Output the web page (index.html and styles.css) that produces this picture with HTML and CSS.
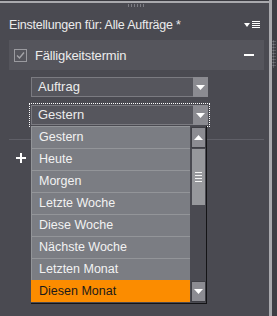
FILE: index.html
```html
<!DOCTYPE html>
<html>
<head>
<meta charset="utf-8">
<link rel="stylesheet" href="styles.css">
</head>
<body>
<div class="app">
  <div class="main">
    <div class="topbar"></div>
    <div class="grip-h"></div>
    <div class="title">
      <span>Einstellungen für: Alle Aufträge *</span>
      <svg class="menu-ico" width="16" height="8" viewBox="0 0 16 8">
        <polygon points="0,2 6,2 3,6" fill="#fff"/>
        <rect x="8" y="0" width="8" height="1" fill="#fff"/>
        <rect x="8" y="2" width="8" height="1" fill="#fff"/>
        <rect x="8" y="4" width="8" height="1" fill="#fff"/>
        <rect x="8" y="6" width="8" height="1" fill="#fff"/>
      </svg>
    </div>
    <div class="header">
      <span class="checkbox">
        <svg width="11" height="11" viewBox="0 0 11 11"><polyline points="2,5.5 4.5,8 9,2.5" fill="none" stroke="#a4a4a8" stroke-width="1.4"/></svg>
      </span>
      <span class="htext">Fälligkeitstermin</span>
      <span class="minus"></span>
    </div>
    <div class="select">
      <span class="sel-text">Auftrag</span>
      <span class="sel-arrow"><svg width="9" height="5" viewBox="0 0 9 5"><polygon points="0,0 9,0 4.5,5" fill="#fff"/></svg></span>
    </div>
    <div class="select focus">
      <span class="sel-text">Gestern</span>
      <span class="sel-arrow"><svg width="9" height="5" viewBox="0 0 9 5"><polygon points="0,0 9,0 4.5,5" fill="#fff"/></svg></span>
    </div>
    <div class="sep"></div>
    <div class="plus"></div>

    <div class="list">
      <div class="items">
        <div class="item">Gestern</div>
        <div class="item">Heute</div>
        <div class="item">Morgen</div>
        <div class="item">Letzte Woche</div>
        <div class="item">Diese Woche</div>
        <div class="item">Nächste Woche</div>
        <div class="item">Letzten Monat</div>
        <div class="item selected">Diesen Monat</div>
      </div>
      <div class="scroll">
        <div class="sbtn"><svg width="9" height="5" viewBox="0 0 9 5"><polygon points="0,5 9,5 4.5,0" fill="#fff"/></svg></div>
        <div class="thumb"><span></span><span></span><span></span><span></span></div>
        <div class="track"></div>
        <div class="sbtn"><svg width="9" height="5" viewBox="0 0 9 5"><polygon points="0,0 9,0 4.5,5" fill="#fff"/></svg></div>
      </div>
    </div>
  </div>
  <div class="vsplit"></div>
  <div class="edge"><div class="grip-v"></div></div>
</div>
</body>
</html>
```

FILE: styles.css
```css
html, body {
  margin: 0;
  padding: 0;
}
body {
  font-family: "Liberation Sans", Arial, sans-serif;
  font-size: 12.5px;
  color: #ececec;
  background: #4a4a51;
}
.app {
  display: flex;
  width: 277px;
  height: 316px;
  overflow: hidden;
  background: #4a4a51;
}
.main {
  width: 269px;
  position: relative;
  display: flex;
  flex-direction: column;
}
.topbar {
  height: 2px;
  border-top: 1px solid #3a3a40;
  background: #a9a9ad;
}
.grip-h {
  position: absolute;
  left: 127px;
  top: 4px;
  width: 18px;
  height: 3px;
  background-image: radial-gradient(circle, #7d7d84 0.8px, transparent 1px);
  background-size: 3px 2px;
}
.title {
  margin: 13px 9px 0 9px;
  height: 18px;
  display: flex;
  align-items: center;
  justify-content: space-between;
  white-space: nowrap;
}
.title span {
  letter-spacing: -0.2px;
}
.header {
  margin: 6px 5px 0 9px;
  height: 30px;
  background: #55555c;
  display: flex;
  align-items: center;
  padding: 0 10px 0 5px;
}
.checkbox {
  width: 13px;
  height: 13px;
  box-sizing: border-box;
  border: 1px solid #9a9a9f;
  display: flex;
  align-items: center;
  justify-content: center;
}
.htext {
  margin-left: 8px;
  flex: 1;
  font-size: 13px;
  letter-spacing: -0.15px;
}
.minus {
  width: 10px;
  height: 2px;
  background: #fff;
}
.select {
  margin: 7px 0 0 31px;
  width: 177px;
  height: 20px;
  display: flex;
}
.select.focus {
  margin-top: 8px;
  outline: 1px dotted #fff;
  outline-offset: 1px;
}
.sel-text {
  flex: 1;
  box-sizing: border-box;
  border: 1px solid #7b7b81;
  border-right: none;
  background: #56565d;
  padding-left: 6px;
  line-height: 18px;
  font-size: 13px;
}
.sel-arrow {
  width: 15px;
  background: #8b8b91;
  display: flex;
  align-items: center;
  justify-content: center;
}
.sep {
  margin: 14px 5px 0 9px;
  height: 1px;
  background: #5f5f67;
}
.plus {
  position: relative;
  margin: 13px 0 0 16px;
  width: 10px;
  height: 10px;
  background:
    linear-gradient(#fff, #fff) 0 4px / 10px 2px no-repeat,
    linear-gradient(#fff, #fff) 4px 0 / 2px 10px no-repeat;
}
.list {
  position: absolute;
  left: 31px;
  top: 126px;
  display: flex;
  background: #4a4a51;
  border-right: 1px solid #141416;
  border-bottom: 1px solid #141416;
  padding-bottom: 1px;
}
.items {
  width: 159px;
}
.item {
  height: 22px;
  box-sizing: border-box;
  border-top: 1px solid #939599;
  border-left: 1px solid #939599;
  background: #7b7d83;
  padding-left: 7px;
  line-height: 21px;
  color: #f2f2f2;
  white-space: nowrap;
}
.item.selected {
  background: #fb8c00;
  border-color: #fb8c00;
  color: #1a1a1a;
}
.scroll {
  width: 16px;
  display: flex;
  flex-direction: column;
  padding: 1px 0 0 1px;
  box-sizing: border-box;
}
.sbtn {
  width: 15px;
  height: 21px;
  box-sizing: border-box;
  border: 1px solid #3f3f45;
  background: #8c8c92;
  display: flex;
  align-items: center;
  justify-content: center;
}
.thumb {
  margin: 1px 0 0 1px;
  width: 13px;
  height: 56px;
  background: #97989c;
  display: flex;
  flex-direction: column;
  align-items: center;
  justify-content: center;
  gap: 2px;
}
.thumb span {
  width: 7px;
  height: 1px;
  background: #f4f4f4;
}
.track {
  flex: 1;
}
.vsplit {
  width: 3px;
  background: #a9a9ad;
}
.edge {
  width: 5px;
  background: #3e3e44;
  display: flex;
  flex-direction: column;
}
.grip-v {
  margin-top: 40px;
  width: 4px;
  height: 28px;
  background-image: radial-gradient(circle, #7d7d84 0.9px, transparent 1.1px);
  background-size: 3px 3px;
}
```
